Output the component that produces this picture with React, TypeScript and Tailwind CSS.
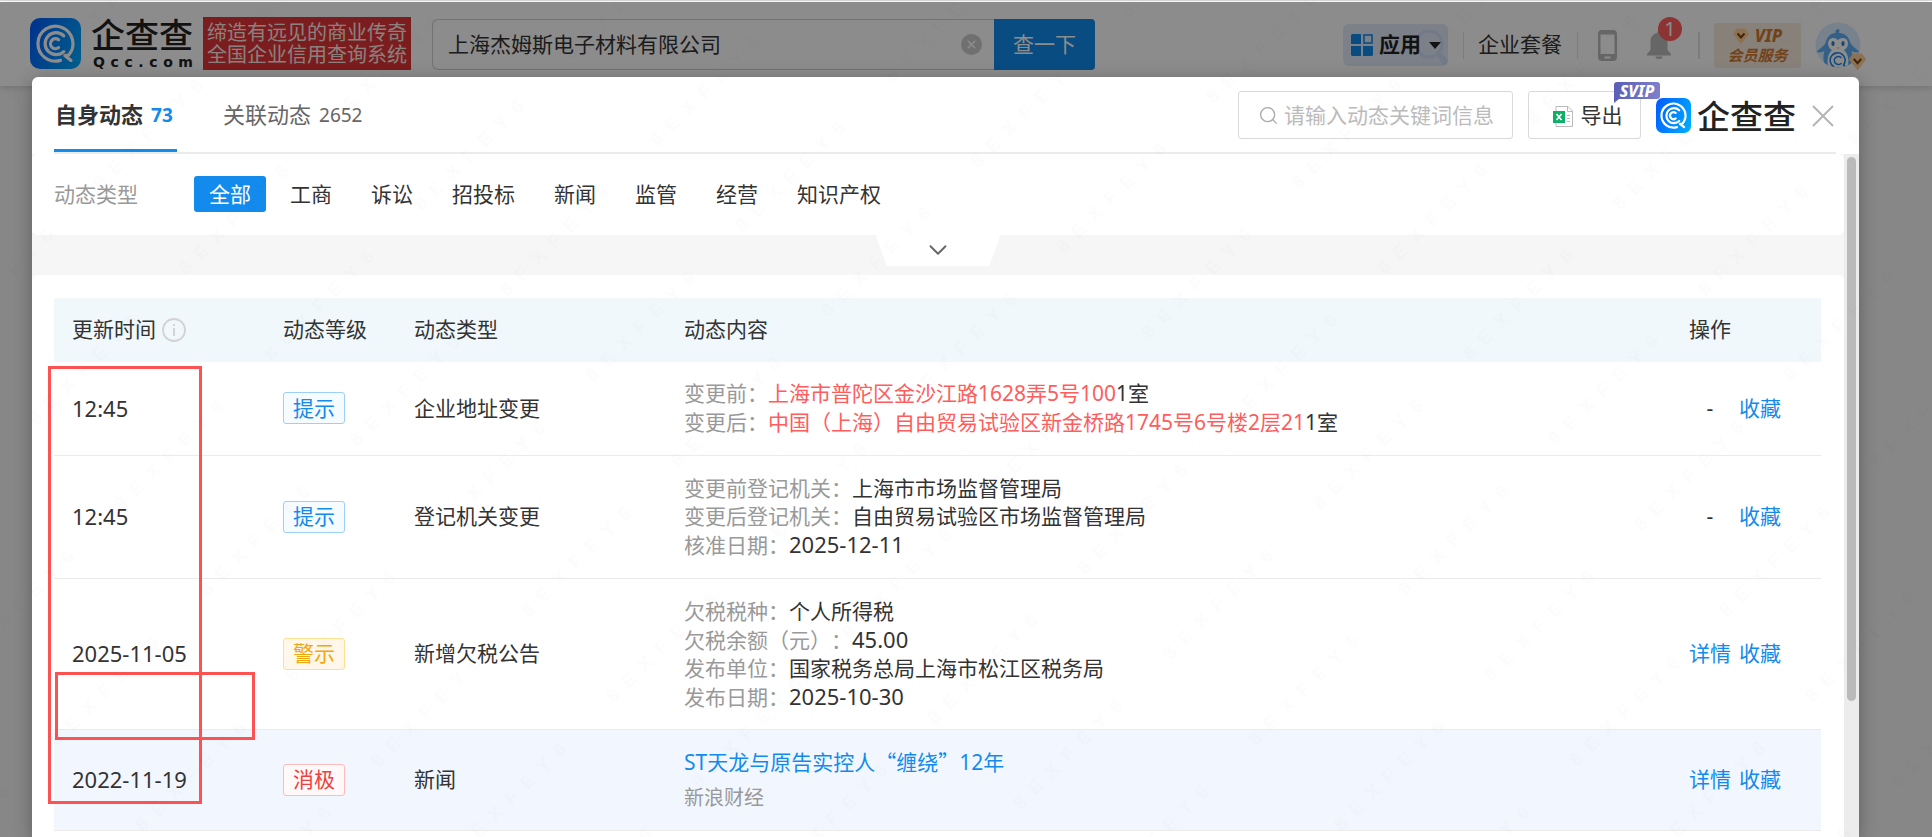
import React from 'react';
import { ChevronDown, Search, X } from 'lucide-react';

const cjk = "font-['Noto_Sans_CJK_SC',sans-serif]";

function LogoMark({ className }: { className: string }) {
  const id = React.useId();
  return (
    <svg viewBox="0 0 51 51" className={className} aria-hidden="true">
      <defs>
        <linearGradient id={id} x1="0" y1="0.3" x2="1" y2="0.7">
          <stop offset="0" stopColor="#0062ff" />
          <stop offset="1" stopColor="#00a8ff" />
        </linearGradient>
      </defs>
      <rect width="51" height="51" rx="10" fill={`url(#${id})`} />
      <g fill="none" stroke="#fff" strokeWidth="3.2" strokeLinecap="round" strokeLinejoin="round">
        <path d="M30.5 42.4A17.5 17.5 0 1 1 38.6 37.2L34.8 37.6L41 42.4" />
        <path d="M33.8 33.6A11 11 0 1 1 33.8 17.8" />
        <path d="M28.6 29.6A5 5 0 1 1 28.6 21.8" />
      </g>
    </svg>
  );
}

function Diamond({ className }: { className: string }) {
  return (
    <svg viewBox="0 0 16 16" className={className} aria-hidden="true">
      <path d="M4 1h8l3.5 5L8 15.5 0.5 6z" fill="#ffcf96" stroke="#ffcf96" strokeLinejoin="round" />
      <path d="M4.5 5.5L8 9.5l3.5-4" fill="none" stroke="#7a3f0c" strokeWidth="2" />
    </svg>
  );
}

function Penguin() {
  return (
    <svg viewBox="0 0 46 46" className="size-[46px]" aria-hidden="true">
      <defs>
        <clipPath id="avatar-clip">
          <circle cx="23" cy="23" r="22.5" />
        </clipPath>
      </defs>
      <circle cx="23" cy="23" r="22.5" fill="#d9edff" />
      <g clipPath="url(#avatar-clip)">
        <path d="M23 7c1.5 0 2 2 1 4 6 0 10 4 11.5 10 2 4 7 6 9 9-3 1-6 0-8-1 2 6 1 12-2 17H11.5c-3-5-4-11-2-17-2 1-5 2-8 1 2-3 7-5 9-9C12 15 15 11.5 20.5 11 20 9 21.5 7 23 7z" fill="#5fb0f6" />
        <path d="M23 18c4-4 10-2 10 3.5 0 3.5-2 5.500-4 6.500 4 3 6 12 3 18H14c-3-6-1-15 3-18-2-1-4-3-4-6.500C13 16 19 14 23 18z" fill="#fff" />
        <ellipse cx="18" cy="21.5" rx="1.6" ry="2.6" fill="#2d7fd0" />
        <ellipse cx="28" cy="21.5" rx="1.6" ry="2.6" fill="#2d7fd0" />
        <path d="M21.5 25.5h3L23 27z" fill="#f5a94a" />
        <g fill="none" stroke="#1e86e8" strokeWidth="1.6" strokeLinecap="round">
          <path d="M18.5 44.5a7.5 7.5 0 1 1 10-1.5l2 2" />
          <path d="M26 41.5a4 4 0 1 1 0-6" />
        </g>
      </g>
    </svg>
  );
}

function TopBar() {
  return (
    <header className="flex h-[84px] items-start bg-white pl-[30px] pr-[71px] shadow-[0_2px_6px_rgba(0,0,0,0.15)]">
      <a href="#home" className="mt-4 flex items-center text-[#222]">
        <LogoMark className="size-[51px]" />
        <span className="ml-[10px] flex w-[104px] flex-col">
          <span className={`text-[34px] leading-[30px] font-medium ${cjk}`}>企查查</span>
          <span className="mt-[6px] flex justify-between px-[2px] font-['DejaVu_Sans',sans-serif] text-[14px] leading-[14px] font-bold">
            <span>Q</span><span>c</span><span>c</span><span>.</span><span>c</span><span>o</span><span>m</span>
          </span>
        </span>
      </a>
      <div className="mt-[15px] ml-2 flex h-[53px] flex-col justify-center bg-[#e03438] px-[4px] text-[20px] leading-[22px] whitespace-nowrap text-[#ffe9e4]">
        <span>缔造有远见的商业传奇</span>
        <span>全国企业信用查询系统</span>
      </div>
      <form className="mt-[17px] ml-[21px] flex h-[51px] w-[663px]">
        <div className="flex flex-1 items-center rounded-l-[6px] border border-r-0 border-[#cfcfcf] pl-[15px] pr-3">
          <input
            aria-label="企业名称"
            defaultValue="上海杰姆斯电子材料有限公司"
            className="min-w-0 flex-1 bg-transparent text-[21px] text-[#333] outline-none"
          />
          <button type="button" aria-label="清除" className="flex size-[21px] items-center justify-center rounded-full bg-[#cccccc] text-white">
            <X size={13} strokeWidth={3} />
          </button>
        </div>
        <button type="button" className="w-[101px] rounded-r-[4px] bg-[#128bed] text-[21px] text-white">查一下</button>
      </form>

      <div className="mt-5 ml-auto flex items-center">
        <button type="button" className="relative flex h-[42px] w-[105px] items-center overflow-hidden rounded-[6px] bg-[#e1eafa] pl-2 text-[#222]">
          <svg viewBox="0 0 34 40" className="absolute top-1 right-0 h-10 w-[34px]" aria-hidden="true">
            <circle cx="15" cy="16" r="13" fill="none" stroke="#cfdff8" strokeWidth="3" />
            <path d="M25 26l6 8" stroke="#cfdff8" strokeWidth="6" strokeLinecap="round" />
          </svg>
          <svg viewBox="0 0 22 22" className="relative size-[22px]" aria-hidden="true">
            <path d="M1 0h9v10H0V1zM0 12h10v10H1l-1-1zM12 12h10v9l-1 1h-9z" fill="#128bed" />
            <rect x="13" y="1" width="8" height="8" fill="none" stroke="#128bed" strokeWidth="1.6" />
          </svg>
          <span className="relative ml-[6px] text-[21px] font-bold">应用</span>
          <svg viewBox="0 0 12 7" className="relative ml-2 h-[7px] w-3" aria-hidden="true">
            <path d="M0 0h12L6 7z" fill="#222" />
          </svg>
        </button>
        <span className="ml-[15px] h-[27px] w-px bg-[#e2e2e2]" />
        <a href="#plans" className="ml-[14px] text-[21px] text-[#333]">企业套餐</a>
        <span className="ml-[15px] h-[27px] w-px bg-[#e2e2e2]" />
        <a href="#mobile" aria-label="手机版" className="ml-5">
          <svg viewBox="0 0 19 31" className="h-[31px] w-[19px]" aria-hidden="true">
            <path fillRule="evenodd" d="M4 0h11a4 4 0 0 1 4 4v23a4 4 0 0 1-4 4H4a4 4 0 0 1-4-4V4a4 4 0 0 1 4-4zM2.5 4.5v19.5h14V4.5zM6.5 26.5v2h6v-2z" fill="#bbb" />
          </svg>
        </a>
        <a href="#messages" aria-label="消息" className="relative ml-[30px]">
          <svg viewBox="0 0 24 28" className="h-7 w-6" aria-hidden="true">
            <path d="M12 0a2 2 0 0 1 2 2c4 1 6.5 4 6.5 8v9l3.5 4v1.5H0V23l3.5-4v-9c0-4 2.5-7 6.5-8a2 2 0 0 1 2-2zM8.5 25.5h7a3.5 2.5 0 0 1-7 0z" fill="#bbb" />
          </svg>
          <span className="absolute -top-[14px] left-[11px] flex size-6 items-center justify-center rounded-full bg-[#ff5e5e] text-[20px] leading-none text-white">1</span>
        </a>
        <span className="ml-[27px] h-[27px] w-[2px] bg-[#e2e2e2]" />
        <a href="#vip" className="ml-[14px] flex h-[45px] w-[87px] flex-col items-center justify-center rounded-[3px] bg-[#f8ecde] font-bold text-[#d07a32] italic">
          <span className="flex items-center gap-[6px] text-[17px] leading-[20px] font-extrabold">
            <Diamond className="size-4" />
            VIP
          </span>
          <span className="text-[15px] leading-[19px]">会员服务</span>
        </a>
        <a href="#account" aria-label="账户" className="relative ml-[14px]">
          <Penguin />
          <Diamond className="absolute -right-[5px] -bottom-[2px] size-[17px]" />
        </a>
      </div>
    </header>
  );
}

type Level = 'hint' | 'warn' | 'bad';
const levelStyle: Record<Level, string> = {
  hint: 'border-[#9dcff9] bg-[#f6fbff] text-[#128bed]',
  warn: 'border-[#ffe08f] bg-[#fff8ea] text-[#f5a60a]',
  bad: 'border-[#ffbaba] bg-[#fff9f9] text-[#f04040]',
};

interface Row {
  time: string;
  level: Level;
  tag: string;
  type: string;
  detail: boolean;
  className: string;
  body: React.ReactNode;
}

function Field({ label, children }: { label: string; children: React.ReactNode }) {
  return (
    <div>
      <span className="text-[#999]">{label}：</span>
      {children}
    </div>
  );
}

const red = 'text-[#ff5c5c]';

const rows: Row[] = [
  {
    time: '12:45', level: 'hint', tag: '提示', type: '企业地址变更', detail: false, className: 'h-[93px]',
    body: (
      <div className="leading-[29px]">
        <Field label="变更前"><span className={red}>上海市普陀区金沙江路1628弄5号100</span>1室</Field>
        <Field label="变更后"><span className={red}>中国（上海）自由贸易试验区新金桥路1745号6号楼2层21</span>1室</Field>
      </div>
    ),
  },
  {
    time: '12:45', level: 'hint', tag: '提示', type: '登记机关变更', detail: false, className: 'h-[123px]',
    body: (
      <div className="leading-[28px]">
        <Field label="变更前登记机关">上海市市场监督管理局</Field>
        <Field label="变更后登记机关">自由贸易试验区市场监督管理局</Field>
        <Field label="核准日期"><span className="text-[22px]">2025-12-11</span></Field>
      </div>
    ),
  },
  {
    time: '2025-11-05', level: 'warn', tag: '警示', type: '新增欠税公告', detail: true, className: 'h-[151px]',
    body: (
      <div className="leading-[28px]">
        <Field label="欠税税种">个人所得税</Field>
        <Field label="欠税余额（元）"><span className="text-[22px]">45.00</span></Field>
        <Field label="发布单位">国家税务总局上海市松江区税务局</Field>
        <Field label="发布日期"><span className="text-[22px]">2025-10-30</span></Field>
      </div>
    ),
  },
  {
    time: '2022-11-19', level: 'bad', tag: '消极', type: '新闻', detail: true, className: 'h-[101px] bg-[#f2f7ff]',
    body: (
      <div className="leading-[36px]">
        <a href="#news" className="block text-[#128bed]">
          ST天龙与原告实控人<span className={cjk}>“</span>缠绕<span className={cjk}>”</span>12年
        </a>
        <div className="text-[20px] text-[#999]">新浪财经</div>
      </div>
    ),
  },
];

const filters = ['全部', '工商', '诉讼', '招投标', '新闻', '监管', '经营', '知识产权'];

function DialogHeader() {
  return (
    <div className="ml-[22px] mr-[23px] flex h-[77px] border-b-2 border-[#ebebeb]">
      <nav className="flex gap-[46px] text-[22px]">
        <button type="button" className="flex h-[75px] w-[123px] items-center border-b-[3px] border-[#128bed] pt-[3px] pl-[1px] font-bold whitespace-nowrap text-[#333]">
          自身动态<span className="ml-2 pt-[2px] text-[19px] text-[#128bed]">73</span>
        </button>
        <button type="button" className="flex h-[75px] items-center text-[#666]">
          关联动态<span className="ml-2 pt-[2px] text-[19px]">2652</span>
        </button>
      </nav>
      <div className="ml-auto flex items-start pt-[14px]">
        <div className="flex h-12 w-[275px] items-center rounded-[3px] border border-[#d9d9d9] pl-[19px]">
          <Search size={21} strokeWidth={1.5} className="shrink-0 text-[#aaa]" />
          <input aria-label="搜索动态" placeholder="请输入动态关键词信息" className="ml-[5px] w-[215px] pt-[2px] text-[21px] outline-none placeholder:text-[#bbb]" />
        </div>
        <button type="button" className="relative ml-[15px] flex h-12 w-[113px] items-center justify-center gap-2 rounded-[3px] border border-[#d9d9d9] pt-[2px] pl-[6px] text-[21px] text-[#333]">
          <svg viewBox="0 0 20 21" className="h-[21px] w-5" aria-hidden="true">
            <path d="M3 .5h12l4.5 4.5v15.5H3z" fill="#fff" stroke="#bbb" />
            <path d="M14.5 .5V5.5h5M14 9.5h3M14 12.5h3M14 15.5h3" fill="none" stroke="#bbb" />
            <rect y="5" width="12" height="12" fill="#0db068" />
            <path d="M3.5 8l5 6M8.5 8l-5 6" stroke="#fff" strokeWidth="1.6" />
          </svg>
          导出
          <span className="absolute -top-[10px] -right-[20px] z-10 flex h-[17px] w-[46px] items-center justify-center rounded-[3px] rounded-bl-none bg-linear-to-r from-[#5b5fb5] to-[#7d80cc] text-[16px] leading-none font-extrabold text-white italic">
            SVIP
            <svg viewBox="0 0 5 4" className="absolute top-full left-0 h-1 w-[5px]" aria-hidden="true">
              <path d="M0 0h5L0 4z" fill="#5b5fb5" />
            </svg>
          </span>
        </button>
        <div className="mt-[6px] ml-[15px] flex h-[36px] items-center gap-[6px] text-[#222]">
          <LogoMark className="size-[35px]" />
          <span className={`text-[33px] leading-[36px] font-medium ${cjk}`}>企查查</span>
        </div>
        <button type="button" aria-label="关闭" className="mt-[9px] -mr-[3px] ml-[11px] text-[#b5b5b5]">
          <svg viewBox="0 0 32 32" className="size-8" aria-hidden="true">
            <path d="M6 6l20 20M26 6L6 26" stroke="currentColor" strokeWidth="2" />
          </svg>
        </button>
      </div>
    </div>
  );
}

function Updates() {
  return (
    <table className="w-full table-fixed border-collapse text-left text-[21px] text-[#333]">
      <colgroup>
        <col className="w-[211px]" />
        <col className="w-[131px]" />
        <col className="w-[270px]" />
        <col />
        <col className="w-[150px]" />
      </colgroup>
      <thead>
        <tr className="h-16 bg-[#f0f8fc]">
          <th className="px-[18px] font-normal">
            <span className="flex items-center gap-[6px]">
              更新时间
              <svg viewBox="0 0 24 24" className="size-6" aria-hidden="true">
                <circle cx="12" cy="12" r="11" fill="none" stroke="#d2d2d2" strokeWidth="1.8" />
                <path d="M12 10v8M12 6v2" stroke="#cfcfcf" strokeWidth="1.8" />
              </svg>
            </span>
          </th>
          <th className="px-[18px] font-normal">动态等级</th>
          <th className="px-[18px] font-normal">动态类型</th>
          <th className="px-[18px] font-normal">动态内容</th>
          <th className="px-[18px] font-normal">操作</th>
        </tr>
      </thead>
      <tbody>
        {rows.map((r, i) => (
          <tr key={i} className={`border-b border-[#ebebeb] ${r.className}`}>
            <td className="px-[18px] text-[22px]">{r.time}</td>
            <td className="px-[18px]">
              <span className={`flex h-8 w-[62px] items-center justify-center rounded-[3px] border ${levelStyle[r.level]}`}>{r.tag}</span>
            </td>
            <td className="px-[18px]">{r.type}</td>
            <td className="px-[18px]">{r.body}</td>
            <td className="pl-[18px]">
              <div className="flex gap-2 text-[#128bed]">
                {r.detail ? (
                  <a href="#detail" className="w-[42px]">详情</a>
                ) : (
                  <span className="w-[42px] text-center text-[#333]">-</span>
                )}
                <a href="#favorite">收藏</a>
              </div>
            </td>
          </tr>
        ))}
      </tbody>
    </table>
  );
}

function Watermark() {
  return (
    <svg className="pointer-events-none absolute inset-0 z-30 size-full" aria-hidden="true">
      <defs>
        <pattern id="mark" width="212" height="121" patternUnits="userSpaceOnUse" patternTransform="translate(172 262) rotate(-45)">
          <text x="0" y="20" fontSize="19" fontWeight="700" fill="#000" fillOpacity="0.012" fontFamily="Liberation Sans, sans-serif">
            {'8\u00a0\u00a0E\u00a0\u00a0X\u00a0\u00a0F\u00a0\u00a0E\u00a0\u00a0Y\u00a0\u00a06'}
          </text>
        </pattern>
      </defs>
      <rect width="100%" height="100%" fill="url(#mark)" />
    </svg>
  );
}

export default function App() {
  return (
    <div className="relative flex h-screen flex-col overflow-hidden bg-[#f6f6f6] font-['Noto_Sans','Noto_Sans_CJK_SC',sans-serif] [text-spacing-trim:space-all]">
      <div className="h-[2px] shrink-0 border-t border-[#d9d9d9] bg-white" />
      <div className="relative flex-1">
        <TopBar />
        <div className="absolute inset-0 z-10 flex bg-black/45 pt-[75px] pr-[73px] pl-8">
          <section role="dialog" aria-label="企业动态" className="flex min-w-0 flex-1 flex-col rounded-t-[6px] bg-white shadow-[0_4px_18px_rgba(0,0,0,0.3)]">
            <DialogHeader />
            <div className="flex min-h-0 flex-1">
              <div className="min-w-0 flex-1 overflow-hidden bg-[#f6f6f6]">
                <div className="flex h-[81px] items-center rounded-[6px] bg-white pb-[1px] pl-[22px] text-[21px]">
                  <span className="w-[140px] pt-[2px] text-[#999]">动态类型</span>
                  <div className="flex gap-[9px]">
                    {filters.map((f, i) => (
                      <button
                        key={f}
                        type="button"
                        className={i === 0 ? 'h-9 rounded-[3px] bg-[#128bed] px-[15px] pt-[2px] text-white' : 'h-9 px-[15px] pt-[2px] text-[#333]'}
                      >
                        {f}
                      </button>
                    ))}
                  </div>
                </div>
                <div className="flex h-10 items-start justify-center">
                  <button type="button" aria-label="展开筛选" className="flex h-[31px] w-[125px] items-center justify-center bg-white pb-[1px] text-[#666] [clip-path:polygon(0_0,100%_0,91%_100%,9%_100%)]">
                    <ChevronDown size={30} strokeWidth={1.5} />
                  </button>
                </div>
                <div className="h-full rounded-t-[6px] bg-white pt-[23px] pr-[23px] pl-[22px]">
                  <Updates />
                </div>
              </div>
              <div className="w-[15px] bg-[#ececec] px-[3px] pt-[3px]">
                <div className="h-[80%] rounded-full bg-[#bababa]" />
              </div>
            </div>
          </section>
        </div>
      </div>
      <div className="pointer-events-none absolute top-[366px] left-[48px] z-20 h-[438px] w-[154px] border-[3px] border-[#fc5252]" />
      <div className="pointer-events-none absolute top-[672px] left-[55px] z-20 h-[68px] w-[200px] border-[3px] border-[#fc5252]" />
      <Watermark />
    </div>
  );
}
